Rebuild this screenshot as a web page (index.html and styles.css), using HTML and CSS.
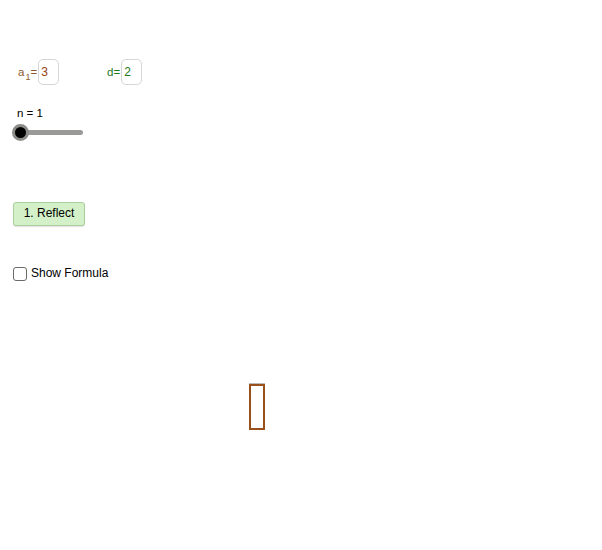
FILE: index.html
```html
<!DOCTYPE html>
<html>
<head>
<meta charset="utf-8">
<link rel="stylesheet" href="styles.css">
</head>
<body>
<div class="canvas">
  <div class="field field-a">
    <span class="label label-a">a<sub>1</sub>=</span>
    <span class="box val-a">3</span>
  </div>
  <div class="field field-d">
    <span class="label label-d">d=</span>
    <span class="box val-d">2</span>
  </div>
  <div class="slider">
    <div class="slider-caption">n = 1</div>
    <div class="slider-track"><span class="knob"></span></div>
  </div>
  <button class="reflect">1. Reflect</button>
  <label class="check"><span class="checkbox"></span>Show Formula</label>
  <div class="rect"></div>
</div>
</body>
</html>
```

FILE: styles.css
```css
html, body {
  margin: 0;
  padding: 0;
  background: #ffffff;
}
.canvas {
  position: relative;
  width: 602px;
  height: 550px;
  font-family: "Liberation Sans", Arial, sans-serif;
  font-size: 12px;
  color: #000;
}
.field {
  position: absolute;
  top: 58px;
  display: flex;
  align-items: center;
  height: 27px;
}
.field-a { left: 18px; }
.field-d { left: 107px; }
.label {
  font-size: 11.5px;
  line-height: 14px;
  margin-right: 1px;
}
.label sub {
  font-size: 9px;
  vertical-align: -4px;
  line-height: 0;
  margin-left: 1px;
}
.label-a { color: #8e5a2a; }
.label-d { color: #267a1f; }
.box {
  box-sizing: border-box;
  width: 21px;
  height: 26px;
  border: 1px solid #d6d6d6;
  border-radius: 5px;
  padding-left: 2px;
  display: flex;
  align-items: center;
  font-size: 12px;
  background: #fff;
}
.val-a { color: #98400e; }
.val-d { color: #1f7a16; }
.slider {
  position: absolute;
  left: 13px;
  top: 107px;
}
.slider-caption {
  font-size: 11.5px;
  line-height: 13px;
  padding-left: 4px;
}
.slider-track {
  position: relative;
  margin-top: 10px;
  margin-left: 7px;
  width: 63px;
  height: 5px;
  border-radius: 3px;
  background: #9a9a98;
}
.knob {
  position: absolute;
  left: -8px;
  top: -6px;
  width: 11px;
  height: 11px;
  border-radius: 50%;
  background: #000;
  border: 3px solid #8c8c88;
}
.reflect {
  position: absolute;
  left: 13px;
  top: 202px;
  width: 72px;
  height: 24px;
  box-sizing: border-box;
  margin: 0;
  padding: 0 0 2px 0;
  font-family: "Liberation Sans", Arial, sans-serif;
  font-size: 12px;
  color: #000;
  background: #d3f0c8;
  border: 1px solid #a9cf9a;
  border-radius: 3px;
  box-shadow: 0 1px 1px rgba(0,0,0,0.12);
}
.check {
  position: absolute;
  left: 13px;
  top: 266px;
  display: flex;
  align-items: center;
  font-size: 12px;
  line-height: 15px;
}
.checkbox {
  box-sizing: border-box;
  width: 14px;
  height: 14px;
  border: 1px solid #6a6a6a;
  border-radius: 3px;
  margin-right: 4px;
  background: #fff;
}
.rect {
  position: absolute;
  left: 249px;
  top: 384px;
  width: 16px;
  height: 46px;
  box-sizing: border-box;
  border: 2px solid #99501a;
  box-shadow: 0 -1px 0 #bbbbbb;
}
```
